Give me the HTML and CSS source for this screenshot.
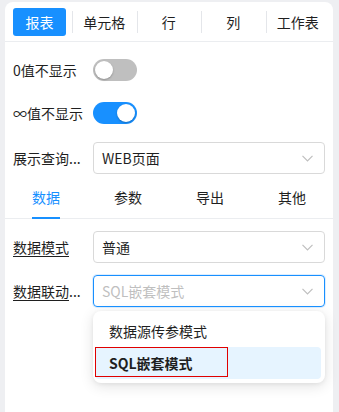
FILE: index.html
```html
<!DOCTYPE html>
<html lang="zh-CN">
<head>
    <meta charset="UTF-8">
    <meta name="viewport" content="width=device-width, initial-scale=1.0">
    <title>报表设置</title>
    <link rel="stylesheet" href="styles.css">
</head>
<body>
    <div class="panel">
        <div class="top-tabs">
            <div class="top-tab active"><span>报表</span></div>
            <div class="top-tab"><span>单元格</span></div>
            <div class="top-tab"><span>行</span></div>
            <div class="top-tab"><span>列</span></div>
            <div class="top-tab"><span>工作表</span></div>
        </div>

        <div class="form">
            <div class="row row-first">
                <div class="label">0值不显示</div>
                <div class="switch"><span class="knob"></span></div>
            </div>
            <div class="row row-second">
                <div class="label">∞值不显示</div>
                <div class="switch on"><span class="knob"></span></div>
            </div>
            <div class="row row-third">
                <div class="label">展示查询...</div>
                <div class="select">
                    <span class="value">WEB页面</span>
                    <svg class="arrow" width="11" height="7" viewBox="0 0 11 7"><path d="M0.5 0.8 L5.5 5.8 L10.5 0.8" fill="none" stroke="#bfbfbf" stroke-width="1.2"/></svg>
                </div>
            </div>
        </div>

        <div class="sub-tabs">
            <div class="sub-tab active">数据</div>
            <div class="sub-tab">参数</div>
            <div class="sub-tab">导出</div>
            <div class="sub-tab">其他</div>
        </div>

        <div class="form">
            <div class="row row-data">
                <div class="label"><span class="underline">数据模式</span></div>
                <div class="select">
                    <span class="value">普通</span>
                    <svg class="arrow" width="11" height="7" viewBox="0 0 11 7"><path d="M0.5 0.8 L5.5 5.8 L10.5 0.8" fill="none" stroke="#bfbfbf" stroke-width="1.2"/></svg>
                </div>
            </div>
            <div class="row row-link">
                <div class="label"><span class="underline">数据联动</span>...</div>
                <div class="select focused">
                    <span class="value placeholder">SQL嵌套模式</span>
                    <svg class="arrow" width="11" height="7" viewBox="0 0 11 7"><path d="M0.5 0.8 L5.5 5.8 L10.5 0.8" fill="none" stroke="#bfbfbf" stroke-width="1.2"/></svg>
                </div>
            </div>
            <div class="dropdown-row">
                <div class="dropdown">
                    <div class="option">数据源传参模式</div>
                    <div class="option selected">SQL嵌套模式<span class="mark"></span></div>
                </div>
            </div>
        </div>
    </div>
</body>
</html>
```

FILE: styles.css
```css
* {
    margin: 0;
    padding: 0;
    box-sizing: border-box;
}
body {
    font-family: "Noto Sans CJK SC", "Noto Sans", sans-serif;
    font-size: 14px;
    color: #1f1f1f;
    background-color: #eeeff2;
    height: 412px;
    overflow: hidden;
    padding: 2px 6px 0 5px;
}
.panel {
    background-color: #fff;
    border-radius: 8px 8px 0 0;
    height: 420px;
}

/* top tab bar */
.top-tabs {
    display: flex;
    padding: 6px 3px 5px 3px;
    border-bottom: 1px solid #ebedf0;
}
.top-tab {
    flex: 1;
    height: 28px;
    display: flex;
    align-items: center;
    justify-content: center;
    position: relative;
    line-height: 20px;
}
.top-tab + .top-tab::before {
    content: "";
    position: absolute;
    left: 0;
    top: 3px;
    bottom: 3px;
    width: 1px;
    background-color: #e4e6ea;
}
.top-tab.active {
    flex: none;
    width: 53px;
    margin: 0 6px 0 5px;
    background-color: #1890ff;
    color: #fff;
    border-radius: 3px;
}

/* form rows */
.form {
    padding: 0 8px;
}
.row {
    display: flex;
    align-items: center;
    height: 32px;
}
.row-first { margin-top: 12px; }
.row-second { margin-top: 11px; }
.row-third { margin-top: 13px; }
.row-data { margin-top: 12px; }
.row-link { margin-top: 12px; }
.label {
    width: 80px;
    white-space: nowrap;
    line-height: 22px;
    flex: none;
}
.label .underline {
    text-decoration: underline;
    text-underline-offset: 3px;
}

.switch {
    width: 44px;
    height: 22px;
    border-radius: 11px;
    background-color: #bfbfbf;
    position: relative;
}
.switch .knob {
    position: absolute;
    top: 2px;
    left: 2px;
    width: 18px;
    height: 18px;
    border-radius: 50%;
    background-color: #fff;
    box-shadow: 0 1px 2px rgba(0, 0, 0, 0.25);
}
.switch.on {
    background-color: #1890ff;
}
.switch.on .knob {
    left: 24px;
}

.select {
    flex: 1;
    height: 32px;
    border: 1px solid #d9d9d9;
    border-radius: 4px;
    display: flex;
    align-items: center;
    justify-content: space-between;
    padding: 0 11px 0 8px;
    line-height: 20px;
}
.select.focused {
    border-color: #1890ff;
    box-shadow: 0 0 0 1px rgba(24, 144, 255, 0.15);
}
.select .placeholder {
    color: #bfbfbf;
}
.select .arrow {
    margin-top: 1px;
}

/* sub tabs */
.sub-tabs {
    display: flex;
    border-bottom: 1px solid #ebedf0;
}
.sub-tab {
    flex: 1;
    height: 45px;
    display: flex;
    align-items: center;
    justify-content: center;
    position: relative;
    line-height: 20px;
    margin-bottom: -1px;
}
.sub-tab.active {
    color: #1890ff;
}
.sub-tab.active::after {
    content: "";
    position: absolute;
    left: 27px;
    width: 28px;
    bottom: 0;
    height: 2px;
    background-color: #1890ff;
}

/* dropdown */
.dropdown-row {
    padding-left: 80px;
    margin-top: 4px;
}
.dropdown {
    background-color: #fff;
    border-radius: 8px;
    padding: 4px 4px 4px 2px;
    box-shadow: 0 3px 14px rgba(0, 0, 0, 0.12), 0 1px 4px rgba(0, 0, 0, 0.06);
}
.option {
    height: 32px;
    line-height: 32px;
    padding-left: 14px;
    border-radius: 4px;
    position: relative;
}
.option.selected {
    background-color: #e6f4ff;
    font-weight: 600;
}
.option .mark {
    position: absolute;
    left: 0;
    top: 0;
    width: 133px;
    height: 30px;
    border: 1px solid #e00000;
}
```
